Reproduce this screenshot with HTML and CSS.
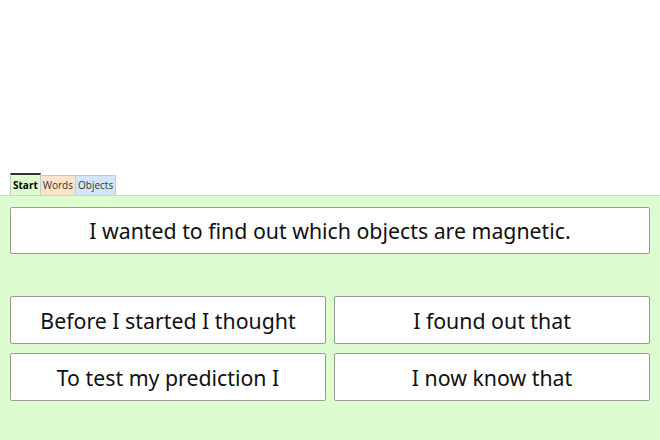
FILE: index.html
```html
<!DOCTYPE html>
<html>
<head>
    <title>Investigation Planner</title>
    <link rel="stylesheet" href="styles.css">
</head>
<body>

    <div class="stage"></div>

    <div class="tabs">
        <div class="tab tab-start">Start</div>
        <div class="tab tab-words">Words</div>
        <div class="tab tab-objects">Objects</div>
    </div>

    <div class="panel">
        <div class="card card-wide">I wanted to find out which objects are magnetic.</div>

        <div class="grid">
            <div class="card">Before I started I thought</div>
            <div class="card">I found out that</div>
            <div class="card">To test my prediction I</div>
            <div class="card">I now know that</div>
        </div>
    </div>

</body>
</html>
```

FILE: styles.css
```css
/* Page frame */
body, html {
    height: 100%;
    margin: 0;
    background: #fff;
    font-family: "Noto Sans", sans-serif;
    color: #111;
}

body {
    display: flex;
    flex-direction: column;
}

.stage {
    height: 173px;
}

/* Tab strip */
.tabs {
    display: flex;
    align-items: flex-end;
    padding-left: 10px;
    height: 22px;
}

.tab {
    font-family: "Open Sans", sans-serif;
    font-size: 10px;
    line-height: 19px;
    padding: 0 2px;
    border: 1px solid #c8c8c8;
    border-bottom: none;
    color: #333;
}

.tab-start {
    background: #ddfdd0;
    border-top: 2px solid #333;
    line-height: 20px;
    font-weight: bold;
    color: #000;
}

.tab-words {
    background: #fce3cc;
    border-left: none;
}

.tab-objects {
    background: #d3e5fb;
    border-left: none;
}

/* Green work area */
.panel {
    flex: 1;
    background: #ddfdd0;
    border-top: 1px solid #c8d8c0;
    padding: 11px 10px 0;
}

.card {
    background: #fff;
    border: 1px solid #999;
    border-radius: 2px;
    height: 46px;
    display: flex;
    align-items: center;
    justify-content: center;
    font-size: 21.3px;
    box-sizing: border-box;
}

.card-wide {
    height: 47px;
    margin-bottom: 42px;
}

.grid {
    display: grid;
    grid-template-columns: 1fr 1fr;
    column-gap: 8px;
    row-gap: 9px;
}

.grid .card {
    height: 48px;
}
```
